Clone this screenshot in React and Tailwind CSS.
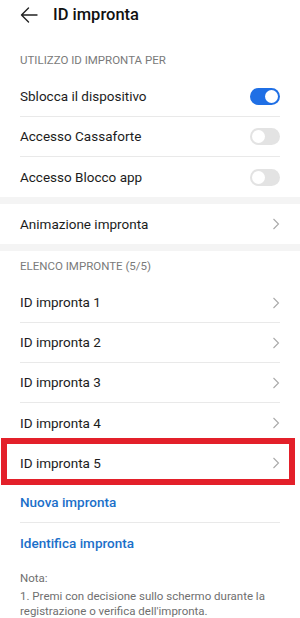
import React from "react";

const font = { fontFamily: "Roboto, 'Noto Sans', sans-serif" };

const Chevron = () => (
  <svg width="8" height="12" viewBox="0 0 8 12" className="shrink-0">
    <path d="M1.5 1 L6.5 6 L1.5 11" fill="none" stroke="#a9a9a9" strokeWidth="1.1" />
  </svg>
);

const Toggle = ({ on }) =>
  on ? (
    <div className="w-[30px] h-[17px] rounded-full bg-[#1f6fe5] flex items-center justify-end px-[2px]">
      <div className="w-[13px] h-[13px] rounded-full bg-white" />
    </div>
  ) : (
    <div className="w-[30px] h-[17px] rounded-full bg-[#e3e3e3] flex items-center justify-start px-[2px]">
      <div className="w-[13px] h-[13px] rounded-full bg-white" />
    </div>
  );

const Row = ({ label, right, divider = true, blue = false, children }) => (
  <div className="relative px-5">
    <div
      className={`h-10 flex items-center justify-between ${
        divider ? "border-b border-[#e9e9e9]" : ""
      }`}
    >
      <span
        className={
          blue
            ? "text-[13.5px] font-medium text-[#1b6fc9]"
            : "text-[13.5px] text-[#1c1c1c]"
        }
      >
        {label}
      </span>
      {right}
    </div>
    {children}
  </div>
);

const SectionLabel = ({ children, className = "" }) => (
  <div className={`px-5 flex items-center text-[11.5px] text-[#7a7a7a] ${className}`}>
    {children}
  </div>
);

export default function App() {
  return (
    <div className="w-[300px] h-[618px] bg-white overflow-hidden" style={font}>
      {/* header */}
      <div className="h-[44px] flex items-start pt-[5px] px-5">
        <div className="h-[20px] flex items-center gap-[15px]">
          <svg width="18" height="16" viewBox="0 0 18 16">
            <path
              d="M17 8 H1.5 M8.5 1 L1.5 8 L8.5 15"
              fill="none"
              stroke="#222"
              strokeWidth="1.4"
              strokeLinecap="round"
              strokeLinejoin="round"
            />
          </svg>
          <span className="text-[16.5px] font-medium text-[#111]">ID impronta</span>
        </div>
      </div>

      <SectionLabel className="h-[33px]">UTILIZZO ID IMPRONTA PER</SectionLabel>
      <Row label="Sblocca il dispositivo" right={<Toggle on />} />
      <Row label="Accesso Cassaforte" right={<Toggle />} />
      <Row label="Accesso Blocco app" right={<Toggle />} divider={false} />

      <div className="h-[7px] bg-[#f4f4f4]" />
      <Row label="Animazione impronta" right={<Chevron />} divider={false} />
      <div className="h-[7px] bg-[#f4f4f4]" />

      <SectionLabel className="h-[32px]">ELENCO IMPRONTE (5/5)</SectionLabel>
      <Row label="ID impronta 1" right={<Chevron />} />
      <Row label="ID impronta 2" right={<Chevron />} />
      <Row label="ID impronta 3" right={<Chevron />} />
      <Row label="ID impronta 4" right={<Chevron />} divider={false} />
      <Row label="ID impronta 5" right={<Chevron />} divider={false}>
        <div className="absolute top-[-5px] bottom-[-2px] left-[1px] right-[5px] border-[6px] border-[#e3202a] pointer-events-none" />
      </Row>
      <Row label="Nuova impronta" blue />
      <Row label="Identifica impronta" blue divider={false} />

      <div className="px-5 pt-[8px] text-[11.5px] leading-[15px] text-[#6f6f6f]">
        <div className="mb-[3px]">Nota:</div>
        <div>
          1. Premi con decisione sullo schermo durante la registrazione o verifica
          dell'impronta.
        </div>
      </div>
    </div>
  );
}
